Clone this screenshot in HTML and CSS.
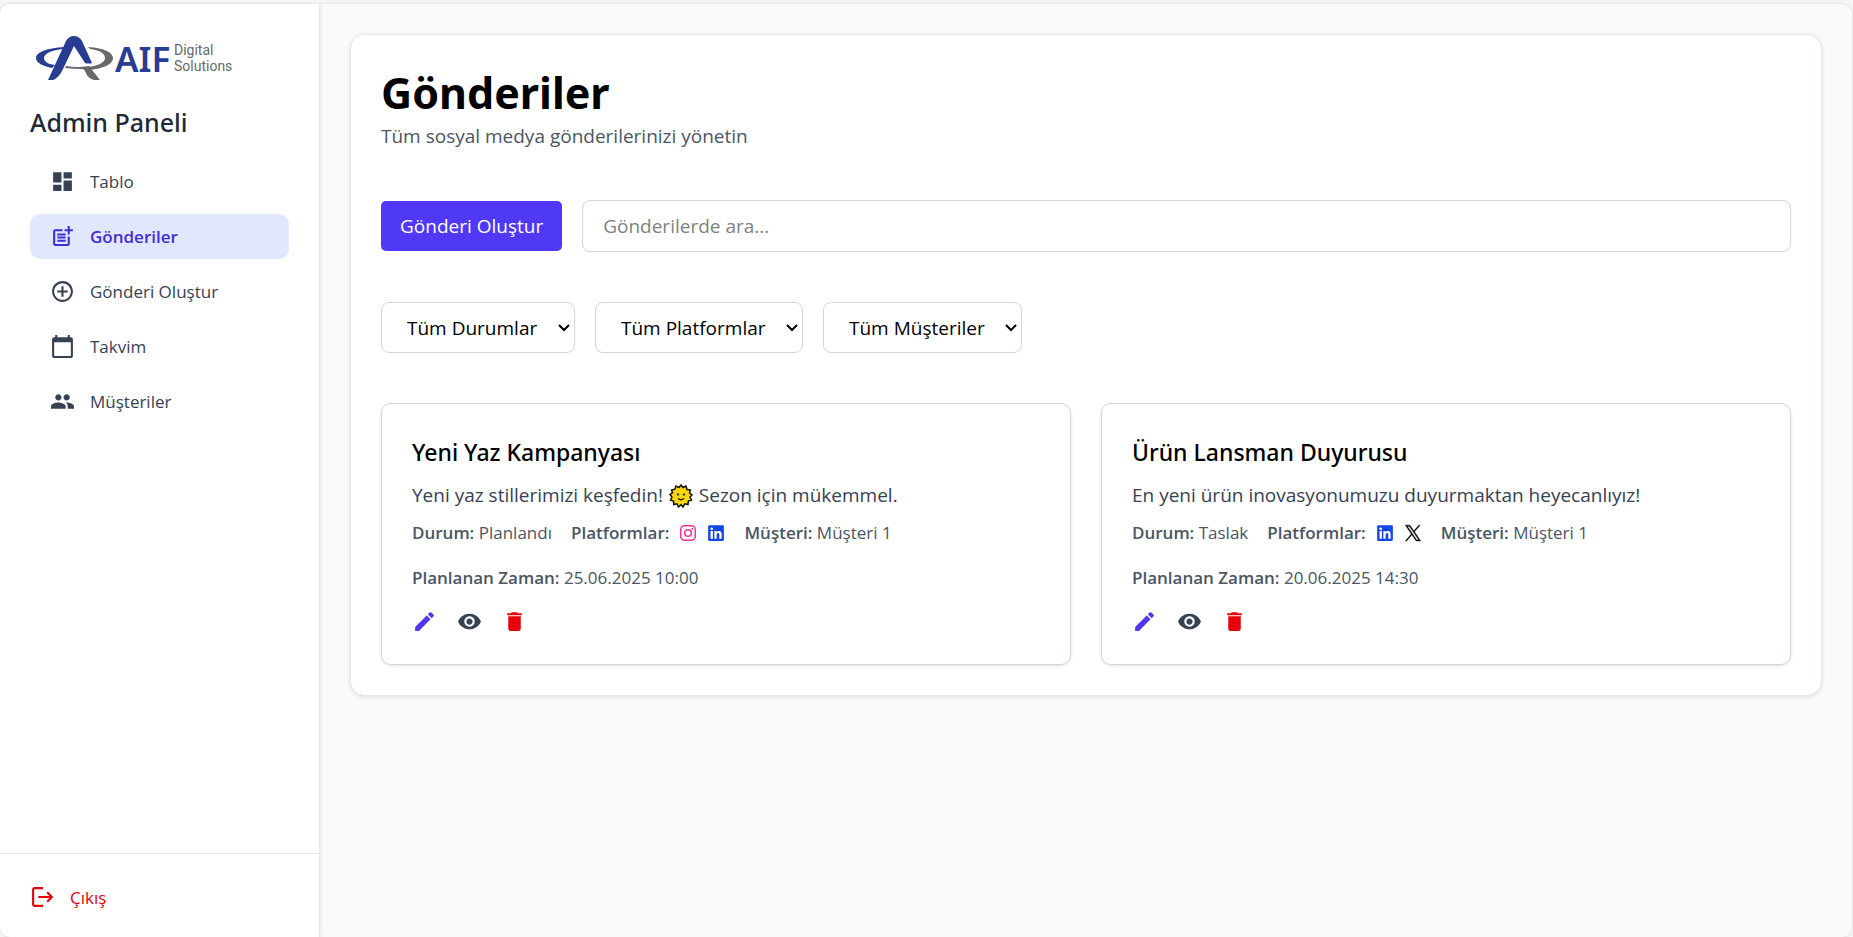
FILE: index.html
```html
<!DOCTYPE html>
<html lang="tr">
<head>
<meta charset="utf-8">
<title>Admin Paneli</title>
<link rel="stylesheet" href="styles.css">
</head>
<body>
<svg class="sprite" aria-hidden="true">
  <symbol id="dashboard" viewBox="0 0 24 24"><path d="M3 13h8V3H3v10zm0 8h8v-6H3v6zm10 0h8V11h-8v10zm0-18v6h8V3h-8z"/></symbol>
  <symbol id="post-add" viewBox="0 0 24 24"><path d="M17 19.220H5V7h7V5H5c-1.100 0-2 .9-2 2v12c0 1.100.9 2 2 2h12c1.100 0 2-.9 2-2v-7h-2v7.220zM19 2h-2v3h-3c.01.010 0 2 0 2h3v2.990c.01.010 2 0 2 0V7h3V5h-3V2zM7 9h8v2H7zM7 12v2h8v-2h-3zM7 15h8v2H7z"/></symbol>
  <symbol id="add-circle" viewBox="0 0 24 24"><path d="M13 7h-2v4H7v2h4v4h2v-4h4v-2h-4V7zm-1-5C6.480 2 2 6.480 2 12s4.480 10 10 10 10-4.480 10-10S17.520 2 12 2zm0 18c-4.410 0-8-3.590-8-8s3.590-8 8-8 8 3.590 8 8-3.590 8-8 8z"/></symbol>
  <symbol id="calendar" viewBox="0 0 24 24"><path d="M20 3h-1V1h-2v2H7V1H5v2H4c-1.100 0-2 .9-2 2v16c0 1.100.9 2 2 2h16c1.100 0 2-.9 2-2V5c0-1.100-.9-2-2-2zm0 18H4V8h16v13z"/></symbol>
  <symbol id="people" viewBox="0 0 24 24"><path d="M16 11c1.660 0 2.990-1.340 2.990-3S17.660 5 16 5s-3 1.340-3 3 1.340 3 3 3zm-8 0c1.660 0 2.990-1.340 2.990-3S9.660 5 8 5 5 6.340 5 8s1.340 3 3 3zm0 2c-2.330 0-7 1.170-7 3.500V19h14v-2.500c0-2.330-4.670-3.500-7-3.500zm8 0c-.29 0-.62.020-.97.050 1.160.84 1.970 1.970 1.970 3.450V19h6v-2.500c0-2.330-4.670-3.500-7-3.500z"/></symbol>
  <symbol id="logout" viewBox="0 0 24 24"><path fill="none" stroke="currentColor" stroke-width="2" d="M12.500 3H4.500Q3 3 3 4.500v14Q3 20 4.500 20h8M8 11.500h13M16.500 7l4.500 4.500-4.500 4.500"/></symbol>
  <symbol id="edit" viewBox="0 0 24 24"><path d="M3 17.250V21h3.750L17.810 9.940l-3.750-3.750L3 17.250zM20.710 7.040a1 1 0 0 0 0-1.410l-2.340-2.340a1 1 0 0 0-1.410 0l-1.830 1.830 3.750 3.750 1.830-1.830z"/></symbol>
  <symbol id="eye" viewBox="0 0 24 24"><path d="M12 4.500C7 4.500 2.730 7.610 1 12c1.730 4.390 6 7.500 11 7.500s9.270-3.110 11-7.500c-1.730-4.390-6-7.500-11-7.500zM12 17c-2.760 0-5-2.240-5-5s2.240-5 5-5 5 2.240 5 5-2.240 5-5 5zm0-8c-1.660 0-3 1.340-3 3s1.340 3 3 3 3-1.340 3-3-1.340-3-3-3z"/></symbol>
  <symbol id="trash" viewBox="0 0 24 24"><path d="M6 19c0 1.100.9 2 2 2h8c1.100 0 2-.9 2-2V7H6v12zM19 4h-3.500l-1-1h-5l-1 1H5v2h14V4z"/></symbol>
  <symbol id="instagram" viewBox="0 0 18 18"><g fill="none" stroke="currentColor" stroke-width="1.500"><rect x="1.700" y="1.700" width="14.600" height="14.600" rx="4"/><circle cx="9" cy="9" r="3.300"/></g><circle cx="13.200" cy="4.800" r="1"/></symbol>
  <symbol id="linkedin" viewBox="0 0 448 512"><path d="M416 32H31.900C14.300 32 0 46.500 0 64.300v383.400C0 465.500 14.300 480 31.900 480H416c17.600 0 32-14.500 32-32.300V64.300c0-17.800-14.400-32.300-32-32.300zM135.400 416H69V202.200h66.500V416zm-33.200-243c-21.300 0-38.500-17.300-38.500-38.500S80.900 96 102.200 96c21.200 0 38.500 17.300 38.500 38.500 0 21.300-17.200 38.500-38.500 38.500zm282.100 243h-66.400V312c0-24.800-.5-56.700-34.500-56.700-34.600 0-39.900 27-39.900 54.900V416h-66.400V202.200h63.700v29.200h.9c8.900-16.800 30.600-34.500 62.900-34.500 67.200 0 79.700 44.300 79.700 101.900V416z"/></symbol>
  <symbol id="x" viewBox="0 0 16 16"><path stroke="currentColor" stroke-width=".4" d="M9.294 6.928 14.357 1h-1.200L8.762 6.147 5.250 1H1.200l5.310 7.784L1.200 15h1.200l4.642-5.436L10.751 15h4.050L9.294 6.928zM7.651 8.852l-.538-.775L2.832 1.910h1.843l3.454 4.977.538.775 4.491 6.470h-1.843L7.651 8.852z"/></symbol>
</svg>
<div class="app">
  <aside class="sidebar">
    <div class="brand">
      <svg class="logo" viewBox="0 0 200 46" role="img" aria-label="AIF Digital Solutions">
        <path class="logo-gray" d="M53 12C70 13 78 18 78 23C78 30 66 34 54 35L52 32C64 31 70 27 70 23C70 18 64 15 55 14Z"/>
        <path class="logo-gray" d="M31 31Q42 33 54 31L65 45H59Q53 44 50 36Q49 34 47 34Q38 34 30 33Z"/>
        <path class="logo-blue" d="M30 12C10 13 1 18 1 23C1 28 8 31 17 33L20 30C12 29 9 26 9 23C9 18 18 15 28 14Z"/>
        <path class="logo-blue" d="M13 45L31 6Q34 1 39 1Q44 1 47 6L57 28Q54 29 50 28L39 11L28 34Q24 43 18 45Z"/>
        <text class="logo-name" x="80" y="37">AIF</text>
        <text class="logo-tag" x="139" y="20">Digital</text>
        <text class="logo-tag" x="139" y="36">Solutions</text>
      </svg>
    </div>
    <h2 class="panel-title">Admin Paneli</h2>
    <nav class="nav">
      <a class="nav-item" href="#tablo"><svg class="icon"><use href="#dashboard"/></svg>Tablo</a>
      <a class="nav-item active" href="#gonderiler" aria-current="page"><svg class="icon"><use href="#post-add"/></svg>Gönderiler</a>
      <a class="nav-item" href="#olustur"><svg class="icon"><use href="#add-circle"/></svg>Gönderi Oluştur</a>
      <a class="nav-item" href="#takvim"><svg class="icon"><use href="#calendar"/></svg>Takvim</a>
      <a class="nav-item" href="#musteriler"><svg class="icon"><use href="#people"/></svg>Müşteriler</a>
    </nav>
    <div class="sidebar-foot">
      <button class="logout" type="button"><svg class="icon"><use href="#logout"/></svg>Çıkış</button>
    </div>
  </aside>
  <main class="main">
    <section class="panel">
      <header>
        <h1 class="title">Gönderiler</h1>
        <p class="subtitle">Tüm sosyal medya gönderilerinizi yönetin</p>
      </header>
      <div class="toolbar">
        <button class="create" type="button">Gönderi Oluştur</button>
        <input class="search" type="search" placeholder="Gönderilerde ara..." aria-label="Gönderilerde ara">
      </div>
      <div class="filters">
        <select class="filter" aria-label="Durum"><option>Tüm Durumlar</option></select>
        <select class="filter" aria-label="Platform"><option>Tüm Platformlar</option></select>
        <select class="filter" aria-label="Müşteri"><option>Tüm Müşteriler</option></select>
      </div>
      <div class="posts">
        <article class="post">
          <h3 class="post-title">Yeni Yaz Kampanyası</h3>
          <p class="post-text">Yeni yaz stillerimizi keşfedin! <svg class="sun" viewBox="0 0 24 24" role="img" aria-label="Güneş"><path fill="#ffd500" stroke="#111" stroke-width="1.500" d="M12 1l2 2.500L17 2l1 3.500 3.500.5-1 3L23 11l-2 2 1.500 3-3.200 1-.3 3.500-3.200-.7L14 23l-2-2.500L9.500 23 8 19.800l-3.200.7L4.500 17l-3-1L3 13l-2-2.500 2.500-1.700L2.500 6 6 5.200 7 2l3 1.500z"/><path fill="none" stroke="#111" stroke-width="1.300" d="M9 14.500q3 2.500 6 0"/><circle cx="9" cy="10.500" r="1.200"/><circle cx="15" cy="10.500" r="1.200"/></svg> Sezon için mükemmel.</p>
          <div class="meta">
            <span><b>Durum:</b> Planlandı</span>
            <span class="platforms"><b>Platformlar:</b><svg class="social pink" role="img" aria-label="Instagram"><use href="#instagram"/></svg><svg class="social blue" role="img" aria-label="LinkedIn"><use href="#linkedin"/></svg></span>
            <span><b>Müşteri:</b> Müşteri 1</span>
          </div>
          <p class="time"><b>Planlanan Zaman:</b> 25.06.2025 10:00</p>
          <div class="actions">
            <button class="action edit" type="button" aria-label="Düzenle"><svg class="icon"><use href="#edit"/></svg></button>
            <button class="action view" type="button" aria-label="Görüntüle"><svg class="icon"><use href="#eye"/></svg></button>
            <button class="action delete" type="button" aria-label="Sil"><svg class="icon"><use href="#trash"/></svg></button>
          </div>
        </article>
        <article class="post">
          <h3 class="post-title">Ürün Lansman Duyurusu</h3>
          <p class="post-text">En yeni ürün inovasyonumuzu duyurmaktan heyecanlıyız!</p>
          <div class="meta">
            <span><b>Durum:</b> Taslak</span>
            <span class="platforms"><b>Platformlar:</b><svg class="social blue" role="img" aria-label="LinkedIn"><use href="#linkedin"/></svg><svg class="social black" role="img" aria-label="X"><use href="#x"/></svg></span>
            <span><b>Müşteri:</b> Müşteri 1</span>
          </div>
          <p class="time"><b>Planlanan Zaman:</b> 20.06.2025 14:30</p>
          <div class="actions">
            <button class="action edit" type="button" aria-label="Düzenle"><svg class="icon"><use href="#edit"/></svg></button>
            <button class="action view" type="button" aria-label="Görüntüle"><svg class="icon"><use href="#eye"/></svg></button>
            <button class="action delete" type="button" aria-label="Sil"><svg class="icon"><use href="#trash"/></svg></button>
          </div>
        </article>
      </div>
    </section>
  </main>
</div>
</body>
</html>
```
FILE: styles.css
```css
* { box-sizing: border-box; }
h1, h2, h3, p { margin: 0; }
body {
  margin: 0;
  padding: 4px 1px 0 0;
  background: #f6f6f6;
  font: 19px/30px "Open Sans", "Noto Sans", sans-serif;
  color: #000;
}
button, input, select { font: inherit; }
svg { fill: currentColor; }
.sprite { display: none; }
.app {
  display: flex;
  height: calc(100vh - 4px);
  background: #f9fafb;
  border-radius: 10px;
  box-shadow: 0 0 2px 1px #e4e4e6;
  overflow: hidden;
}
.sidebar {
  display: flex;
  flex-direction: column;
  flex: 0 0 320px;
  background: #fff;
  border-right: 1px solid #e5e7eb;
  box-shadow: 0 1px 4px rgba(0, 0, 0, .12);
}
.brand { padding: 31px 35px 0; }
.logo { display: block; width: 200px; height: 46px; overflow: visible; }
.logo-blue, .logo-name { fill: #283c91; }
.logo-gray, .logo-tag { fill: #68696d; }
.logo-name { font: 600 35px "Noto Sans", sans-serif; }
.logo-tag { font: 14px Roboto, sans-serif; }
.panel-title, .title, .post-title { font-family: "Noto Sans", sans-serif; }
.panel-title {
  padding: 24px 30px 0;
  font-size: 25px;
  line-height: 35px;
  font-weight: 500;
  color: #1e2939;
}
.nav { display: flex; flex-direction: column; gap: 10px; padding: 19px 30px 0; }
.nav-item {
  display: flex;
  align-items: center;
  gap: 15px;
  height: 45px;
  padding: 0 20px;
  border-radius: 10px;
  font-size: 17px;
  color: #364153;
  text-decoration: none;
}
.nav-item.active { background: #e0e7ff; color: #432dd7; font-weight: 600; }
.icon { display: block; width: 25px; height: 25px; flex: none; }
.sidebar-foot { margin-top: auto; padding: 31px 30px 27px; border-top: 1px solid #e5e7eb; }
.logout {
  display: flex;
  align-items: center;
  gap: 15px;
  padding: 0;
  border: 0;
  background: none;
  font-size: 17px;
  line-height: 25px;
  color: #e7000b;
}
.main { flex: 1; min-width: 0; padding: 30px; }
.panel {
  padding: 30px;
  background: #fff;
  border: 1px solid #e5e7eb;
  border-radius: 15px;
  box-shadow: 0 1px 4px rgba(0, 0, 0, .12);
}
.title { font-size: 43px; line-height: 56px; font-weight: 700; }
.subtitle { color: #4a5565; line-height: 30px; }
.toolbar { display: flex; align-items: center; gap: 20px; margin-top: 49px; }
.create {
  height: 50px;
  padding: 0 19px;
  border: 0;
  border-radius: 5px;
  background: #4f39f6;
  color: #fff;
}
.search {
  flex: 1;
  height: 52px;
  padding: 0 20px;
  border: 1px solid #d1d5dc;
  border-radius: 8px;
  background: #fff;
}
.search::placeholder { color: #808080; }
.filters { display: flex; gap: 20px; margin-top: 50px; }
.filter {
  height: 51px;
  padding: 0 36px 0 25px;
  border: 1px solid #d1d5dc;
  border-radius: 8px;
  appearance: none;
  background: #fff url("data:image/svg+xml,%3Csvg xmlns='http://www.w3.org/2000/svg' width='12' height='8'%3E%3Cpath d='M1 1l5 5 5-5' fill='none' stroke='black' stroke-width='2'/%3E%3C/svg%3E") no-repeat right 4px center;
  color: #000;
}
.posts { display: grid; grid-template-columns: 1fr 1fr; gap: 30px; margin-top: 50px; }
.post {
  padding: 30px;
  border: 1px solid #d1d5dc;
  border-radius: 10px;
  box-shadow: 0 1px 3px rgba(0, 0, 0, .12);
}
.post-title { font-size: 23px; line-height: 36px; font-weight: 500; }
.post-text { margin-top: 10px; color: #364153; }
.sun { width: 24px; height: 24px; margin: 0 1px; vertical-align: text-bottom; }
.meta, .time { margin-top: 10px; font-size: 17px; line-height: 25px; color: #4a5565; }
.meta { display: flex; flex-wrap: wrap; gap: 19px; }
.time { margin-top: 20px; }
.meta b, .time b { font-weight: 600; }
.platforms { display: flex; align-items: center; gap: 10px; }
.social { width: 18px; height: 18px; }
.pink { color: #f6339a; }
.blue { color: #1447e6; }
.black { color: #000; }
.actions { display: flex; gap: 20px; margin-top: 19px; }
.action { padding: 0; border: 0; background: none; }
.edit { color: #4f39f6; }
.view { color: #364153; }
.delete { color: #e7000b; }
```
